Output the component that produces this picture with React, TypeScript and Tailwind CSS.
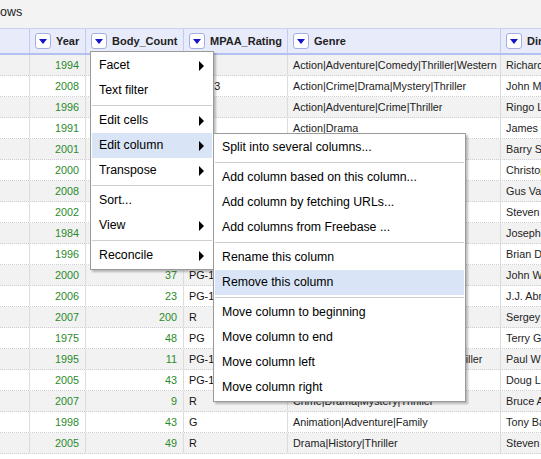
import React from 'react';

type Row = { year: string; body: string; mpaa: string; genre: string; director: string };

const rows: Row[] = [
  { year: '1994', body: '25', mpaa: 'PG', genre: 'Action|Adventure|Comedy|Thriller|Western', director: 'Richard Donner' },
  { year: '2008', body: '17', mpaa: 'PG-13', genre: 'Action|Crime|Drama|Mystery|Thriller', director: 'John Moore' },
  { year: '1996', body: '42', mpaa: 'R', genre: 'Action|Adventure|Crime|Thriller', director: 'Ringo Lam' },
  { year: '1991', body: '21', mpaa: 'R', genre: 'Action|Drama', director: 'James Glickenhaus' },
  { year: '2001', body: '10', mpaa: 'R', genre: 'Comedy|Drama|Sport', director: 'Barry Skolnick' },
  { year: '2000', body: '4', mpaa: 'R', genre: 'Mystery|Thriller', director: 'Christopher Nolan' },
  { year: '2008', body: '2', mpaa: 'R', genre: 'Biography|Drama', director: 'Gus Van Sant' },
  { year: '2002', body: '6', mpaa: 'PG-13', genre: 'Action|Mystery|Sci-Fi|Thriller', director: 'Steven Spielberg' },
  { year: '1984', body: '93', mpaa: 'R', genre: 'Action|War', director: 'Joseph Zito' },
  { year: '1996', body: '16', mpaa: 'PG-13', genre: 'Action|Adventure|Thriller', director: 'Brian De Palma' },
  { year: '2000', body: '37', mpaa: 'PG-13', genre: 'Action|Adventure|Thriller', director: 'John Woo' },
  { year: '2006', body: '23', mpaa: 'PG-13', genre: 'Action|Adventure|Thriller', director: 'J.J. Abrams' },
  { year: '2007', body: '200', mpaa: 'R', genre: 'Biography|Drama|History|War', director: 'Sergey Bodrov' },
  { year: '1975', body: '48', mpaa: 'PG', genre: 'Adventure|Comedy|Fantasy', director: 'Terry Gilliam' },
  { year: '1995', body: '11', mpaa: 'PG-13', genre: 'Action|Adventure|Fantasy|Sci-Fi|Thriller', director: 'Paul W.S. Anderson' },
  { year: '2005', body: '43', mpaa: 'PG-13', genre: 'Action|Comedy|Crime|Thriller', director: 'Doug Liman' },
  { year: '2007', body: '9', mpaa: 'R', genre: 'Crime|Drama|Mystery|Thriller', director: 'Bruce A. Evans' },
  { year: '1998', body: '43', mpaa: 'G', genre: 'Animation|Adventure|Family', director: 'Tony Bancroft' },
  { year: '2005', body: '49', mpaa: 'R', genre: 'Drama|History|Thriller', director: 'Steven Spielberg' },
];

const DropButton = () => (
  <span className="w-4 h-4 shrink-0 bg-white border border-[#a4aee6] rounded-[3px] flex items-center justify-center">
    <span className="w-0 h-0 border-x-[4.5px] border-x-transparent border-t-[5px] border-t-[#1616c8]" />
  </span>
);

const HeaderCell = ({ label, w }: { label: string; w: string }) => (
  <div className={`${w} shrink-0 h-full flex items-center gap-[5px] pl-[5px] border-l border-[#c3cbf1] overflow-hidden whitespace-nowrap`}>
    <DropButton />
    <span className="font-bold text-[11px] text-[#222]">{label}</span>
  </div>
);

const Arrow = () => (
  <span className="w-0 h-0 border-y-[5px] border-y-transparent border-l-[5px] border-l-black" />
);

type Item = { label: string; sub?: boolean; active?: boolean } | 'sep';

const MenuItem = ({ item }: { item: Item }) => {
  if (item === 'sep') return <div className="my-[2px] h-px bg-[#cfcfcf]" />;
  return (
    <div className={`h-[25px] flex items-center justify-between pl-[7px] pr-[8px] whitespace-nowrap ${item.active ? 'bg-[#d9e5f6]' : ''}`}>
      <span>{item.label}</span>
      {item.sub && <Arrow />}
    </div>
  );
};

const mainMenu: Item[] = [
  { label: 'Facet', sub: true },
  { label: 'Text filter' },
  'sep',
  { label: 'Edit cells', sub: true },
  { label: 'Edit column', sub: true, active: true },
  { label: 'Transpose', sub: true },
  'sep',
  { label: 'Sort...' },
  { label: 'View', sub: true },
  'sep',
  { label: 'Reconcile', sub: true },
];

const subMenu: Item[] = [
  { label: 'Split into several columns...' },
  'sep',
  { label: 'Add column based on this column...' },
  { label: 'Add column by fetching URLs...' },
  { label: 'Add columns from Freebase ...' },
  'sep',
  { label: 'Rename this column' },
  { label: 'Remove this column', active: true },
  'sep',
  { label: 'Move column to beginning' },
  { label: 'Move column to end' },
  { label: 'Move column left' },
  { label: 'Move column right' },
];

const App = () => {
  return (
    <div className="relative w-[541px] h-[459px] overflow-hidden bg-white font-['Liberation_Sans',Arial,sans-serif]">
      <div className="h-[28px] bg-[#f3f3f3] flex items-start pt-[3px] text-[12.5px] text-[#222]">ows</div>

      <div className="h-[27px] bg-[#e8ebfa] border-t border-t-[#c9d0f3] border-b-2 border-b-[#b4c1f0] flex">
        <div className="w-[29px] shrink-0" />
        <HeaderCell label="Year" w="w-[56px]" />
        <HeaderCell label="Body_Count" w="w-[98px]" />
        <HeaderCell label="MPAA_Rating" w="w-[104px]" />
        <HeaderCell label="Genre" w="w-[213px]" />
        <HeaderCell label="Director" w="w-[60px]" />
      </div>

      <div className="text-[10.8px]">
        {rows.map((r, i) => (
          <div key={i} className={`h-[21px] flex border-b border-dotted border-b-[#cfcfcf] ${i % 2 === 0 ? 'bg-[#f2f2f2]' : 'bg-white'}`}>
            <div className="w-[29px] shrink-0" />
            <div className="w-[56px] shrink-0 border-l border-[#dcdcdc] flex items-center justify-end pr-[6px] text-[#2a8a2a]">{r.year}</div>
            <div className="w-[98px] shrink-0 border-l border-[#dcdcdc] flex items-center justify-end pr-[6px] text-[#2a8a2a]">{r.body}</div>
            <div className="w-[104px] shrink-0 border-l border-[#dcdcdc] flex items-center pl-[5px] text-[#111]">{r.mpaa}</div>
            <div className="w-[213px] shrink-0 border-l border-[#dcdcdc] flex items-center pl-[5px] text-[#222] whitespace-nowrap overflow-hidden">{r.genre}</div>
            <div className="w-[60px] shrink-0 border-l border-[#dcdcdc] flex items-center pl-[5px] text-[#222] whitespace-nowrap overflow-hidden">{r.director}</div>
          </div>
        ))}
      </div>

      <div className="absolute left-[90px] top-[51px] w-[124px] bg-white border border-[#9a9a9a] p-px text-[12.3px] text-black shadow-[2px_2px_2px_rgba(0,0,0,0.25)]">
        {mainMenu.map((it, i) => (
          <MenuItem key={i} item={it} />
        ))}
      </div>

      <div className="absolute left-[213px] top-[133px] w-[253px] bg-white border border-[#9a9a9a] p-px text-[12.3px] text-black shadow-[2px_2px_2px_rgba(0,0,0,0.25)]">
        {subMenu.map((it, i) => (
          <MenuItem key={i} item={it} />
        ))}
      </div>
    </div>
  );
};

export default App;
